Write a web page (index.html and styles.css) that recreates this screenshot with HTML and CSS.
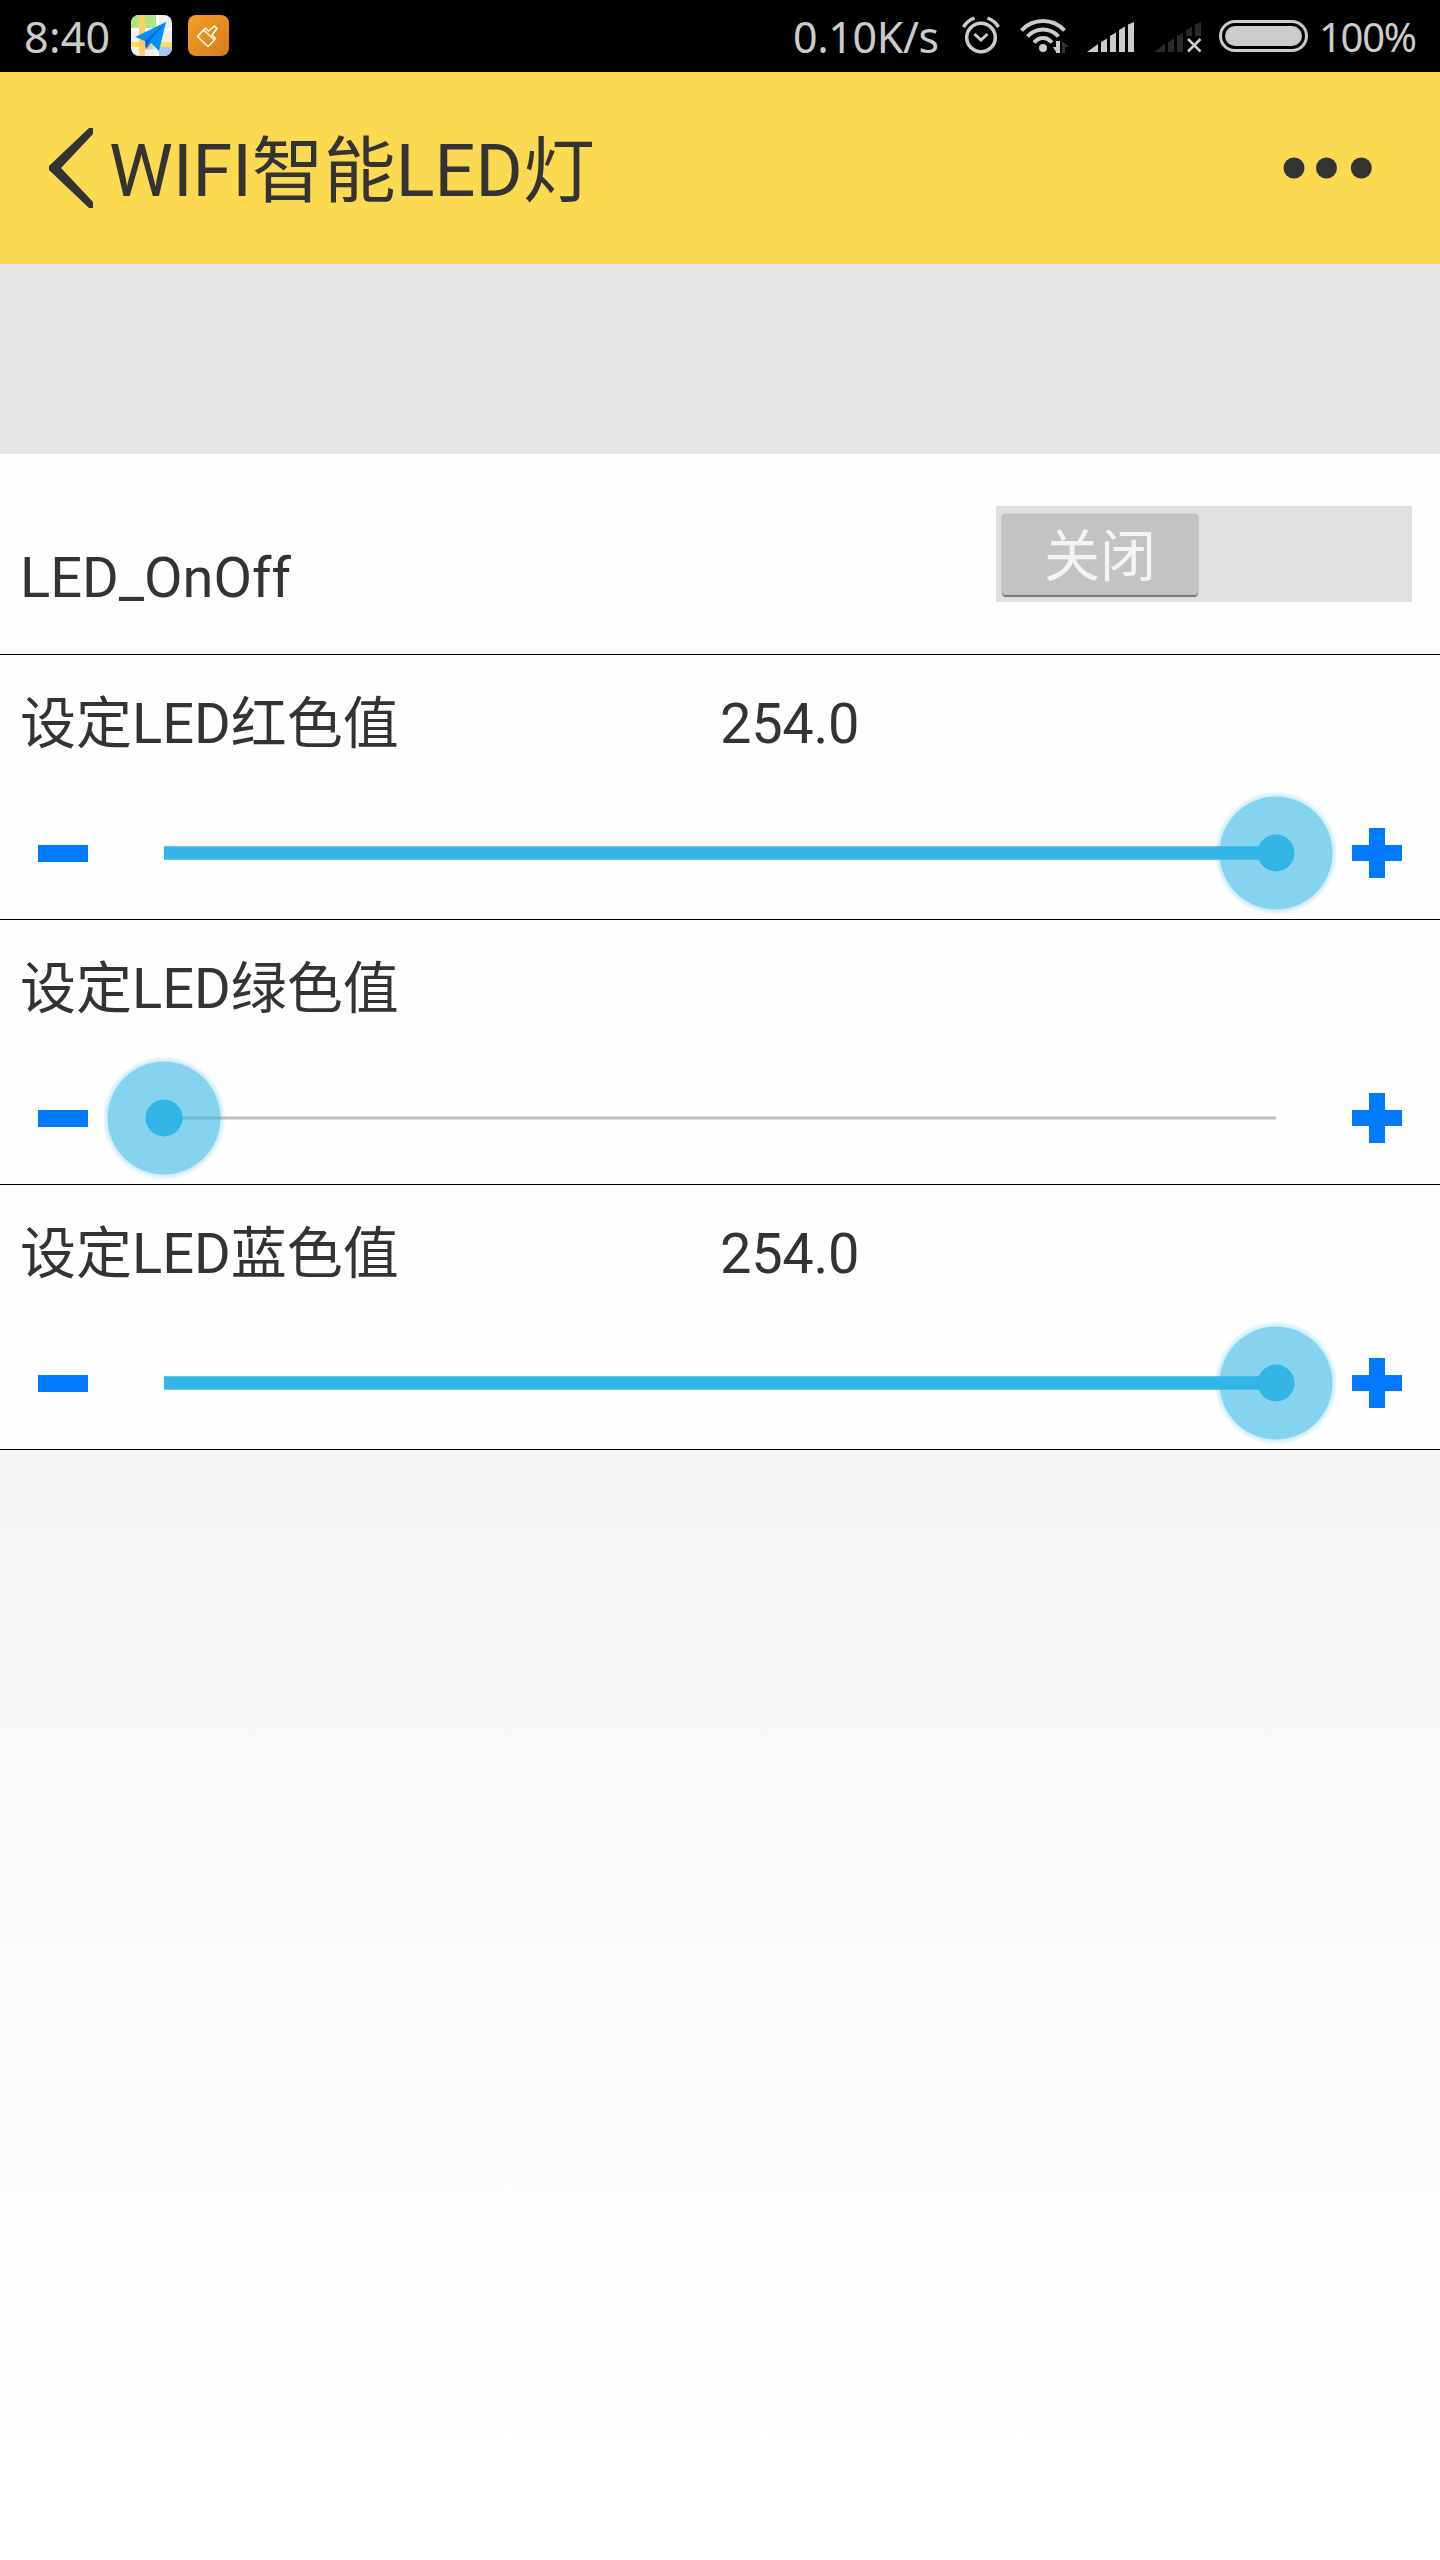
FILE: index.html
```html
<!DOCTYPE html>
<html lang="zh-CN">
<head>
<meta charset="utf-8">
<title>WIFI智能LED灯</title>
<link rel="stylesheet" href="styles.css">
</head>
<body>
<div class="status">
  <span class="clock">8:40</span>
  <svg class="app-map" width="41" height="41" viewBox="0 0 41 41">
    <defs><clipPath id="tile"><rect width="41" height="41" rx="8"/></clipPath></defs>
    <g clip-path="url(#tile)">
      <rect width="41" height="41" fill="#f2f0ec"/>
      <path d="M0 0h25v13H0z" fill="#aee67f"/>
      <path d="M25 0h3v41h-3zM0 13h41v3H0z" fill="#fff"/>
      <path d="M28 32h13v9H28z" fill="#a8c8fb"/>
      <path d="M0 27h41v5H0z" fill="#ffdf4f"/>
      <path d="M8 0h6v41H8z" fill="#ffcc66"/>
    </g>
    <path d="M15 27l-1 8 10-1z" fill="#b8b6ae" opacity=".6"/>
    <path d="M35 7L4 22l10 4 1 8 5-6 8 8z" fill="#0091ff"/>
    <path d="M35 7L14 26l1 8 3-7z" fill="#0067c8"/>
  </svg>
  <svg class="app-clean" width="41" height="41" viewBox="0 0 41 41">
    <defs><linearGradient id="amber" x2="1" y2="1"><stop stop-color="#f2a024"/><stop offset="1" stop-color="#d67a1f"/></linearGradient></defs>
    <rect width="41" height="41" rx="8" fill="url(#amber)"/>
    <path d="M9.500 21.500L15.500 15l11 10-6.500 6.500zM15.500 15l2-2 3 3 6-5 2.500 2.500-5 6.500 3.500 3.500-2 2" fill="none" stroke="#fff" stroke-width="1.500" stroke-linejoin="round"/>
  </svg>
  <span class="rate">0.10K/s</span>
  <svg class="alarm" width="38" height="38" viewBox="0 0 38 38" fill="none" stroke="#ccc" stroke-width="3.500">
    <circle cx="19" cy="21.500" r="14.300"/>
    <path d="M12.500 18l6.500 6 6.500-6" stroke-width="3"/>
    <path d="M1.500 11Q5 5 12.500 2M25.500 2Q33 5 36.500 11"/>
  </svg>
  <svg class="wifi" width="50" height="36" viewBox="0 0 50 36">
    <g fill="none" stroke="#ccc" stroke-width="4">
      <path d="M1.500 12.500Q10 3 23 3t21.500 9.500"/>
      <path d="M7.500 18.500Q14 11.500 23 11.500t15.500 7"/>
      <path d="M14 24.500Q18 20 23 20t9 4.500"/>
    </g>
    <circle cx="23" cy="30" r="4" fill="#ccc"/>
    <path d="M36 23h4v12h-4zM33 29h3v5z" fill="#ccc"/>
    <path d="M42 23l7 6h-4v6h-3z" fill="#333"/>
  </svg>
  <svg class="signal" width="48" height="31" viewBox="0 0 48 31" fill="#ccc"><path d="M0 30l11-8v8zM14 30V20l6-3.500V30zM23 30V14l6-3.500V30zM32 30V8l6-3.500V30zM41 30V2.500L47 0v30z"/></svg>
  <svg class="signal-off" width="48" height="31" viewBox="0 0 48 31" fill="#292929"><path d="M0 30l11-8v8zM14 30V20l6-3.500V30zM23 30V14l6-3.500V30zM32 14V8l6-3.500V14zM41 14V2.500L47 0v14z"/><path d="M34 17l12.500 12.500m0-12.500L34 29.500" stroke="#ccc" stroke-width="2.500"/></svg>
  <svg class="battery" width="89" height="32" viewBox="0 0 89 32"><rect x="1.500" y="1.500" width="86" height="29" rx="14.500" fill="none" stroke="#ccc" stroke-width="3"/><rect x="6" y="6" width="77" height="20" rx="10" fill="#ccc"/></svg>
  <span class="percent">100%</span>
</div>
<header class="titlebar">
  <svg class="back" width="44" height="80" viewBox="0 0 44 80"><path d="M40 0h4v6L12 40l32 34v6h-4L0 42v-4z" fill="#333"/></svg>
  <h1 class="title">WIFI智能LED灯</h1>
  <svg class="more" width="90" height="22" viewBox="0 0 90 22" fill="#333"><circle cx="11" cy="11" r="10.500"/><circle cx="43.500" cy="11" r="10.500"/><circle cx="78.300" cy="11" r="10.500"/></svg>
</header>
<div class="band"></div>
<main class="list">
  <section class="row switch-row">
    <span class="label">LED_OnOff</span>
    <div class="switch"><span class="knob">关闭</span></div>
  </section>
  <section class="row slider-row">
    <div class="info"><span class="label">设定LED红色值</span><span class="value">254.0</span></div>
    <div class="control">
      <i class="minus"></i>
      <svg class="slider" width="1232" height="124" viewBox="0 0 1232 124"><use href="#full"/></svg>
      <svg class="plus" width="50" height="50" viewBox="0 0 50 50"><path d="M17 0h16v17h17v16H33v17H17V33H0V17h17z" fill="#007aff"/></svg>
    </div>
  </section>
  <section class="row slider-row">
    <div class="info"><span class="label">设定LED绿色值</span></div>
    <div class="control">
      <i class="minus"></i>
      <svg class="slider" width="1232" height="124" viewBox="0 0 1232 124"><path d="M60 60.600h1112v2.800H60z" fill="#bfbfbf"/><use href="#thumb" x="60"/></svg>
      <svg class="plus" width="50" height="50" viewBox="0 0 50 50"><path d="M17 0h16v17h17v16H33v17H17V33H0V17h17z" fill="#007aff"/></svg>
    </div>
  </section>
  <section class="row slider-row">
    <div class="info"><span class="label">设定LED蓝色值</span><span class="value">254.0</span></div>
    <div class="control">
      <i class="minus"></i>
      <svg class="slider" width="1232" height="124" viewBox="0 0 1232 124">
        <defs>
          <radialGradient id="halo"><stop offset=".9" stop-color="#33b5e5" stop-opacity=".3"/><stop offset="1" stop-color="#33b5e5" stop-opacity="0"/></radialGradient>
          <g id="thumb">
            <path d="M0 0a62 62 0 0 1 0 124a62 62 0 0 1 0-124M0 6a56 56 0 0 0 0 112a56 56 0 0 0 0-112" fill="url(#halo)"/>
            <circle cy="62" r="56.300" fill="#33b5e5" fill-opacity=".6"/>
            <circle cy="62" r="18.500" fill="#33b5e5"/>
          </g>
          <g id="full"><path d="M60 55.300h1112v13.400H60z" fill="#33b5e5"/><use href="#thumb" x="1172"/></g>
        </defs>
        <use href="#full"/>
      </svg>
      <svg class="plus" width="50" height="50" viewBox="0 0 50 50"><path d="M17 0h16v17h17v16H33v17H17V33H0V17h17z" fill="#007aff"/></svg>
    </div>
  </section>
</main>
</body>
</html>
```

FILE: styles.css
```css
* { box-sizing: border-box; }
body {
  margin: 0;
  width: 1440px;
  min-height: 2560px;
  display: flex;
  flex-direction: column;
  font-family: Roboto, "Noto Sans CJK SC", sans-serif;
  color: #333;
  background: linear-gradient(#e6e6e6 264px, #f5f5f5 1450px, #fafafa 1900px, #fff 2450px);
}
svg { display: block; flex: none; }

.status {
  height: 72px;
  background: #000;
  color: #ccc;
  display: flex;
  align-items: flex-start;
  font-family: "Noto Sans", sans-serif;
  font-size: 43px;
  line-height: 74px;
  white-space: nowrap;
}
.clock { width: 107px; margin-left: 24px; letter-spacing: 0.3px; }
.app-map { margin-top: 15px; }
.app-clean { margin: 15px 0 0 16px; }
.rate { width: 169px; margin-left: 564px; letter-spacing: -0.4px; }
.alarm { margin-top: 16px; }
.wifi { margin: 18px 0 0 20px; }
.signal { margin: 22px 0 0 17px; }
.signal-off { margin: 22px 0 0 19px; }
.battery { margin: 20px 0 0 17px; }
.percent { margin-left: 11px; font-size: 40px; letter-spacing: -1.3px; }

.titlebar {
  height: 192px;
  background: #fbd950;
  display: flex;
  align-items: center;
  padding: 0 67px 0 49px;
}
.title {
  margin: 7px auto 0 16px;
  font-size: 72px;
  font-weight: 400;
  line-height: 84px;
  white-space: nowrap;
}
.band { height: 190px; background: #e6e6e6; }
.list { background: #fefefe; }
.row { border-bottom: 1px solid #000; }
.label, .value { font-size: 56px; line-height: 66px; white-space: nowrap; }
.value { letter-spacing: -0.3px; }

.switch-row {
  height: 201px;
  display: flex;
  justify-content: space-between;
  padding: 52px 28px 0 20px;
}
.switch-row .label { margin-top: 39px; }
.switch {
  width: 416px;
  height: 96px;
  padding: 8px 0 0 6px;
  background: #e0e0e0;
}
.knob {
  display: block;
  width: 196px;
  height: 81px;
  border-radius: 4px;
  background: #c3c3c3;
  box-shadow: 0 2px 1px #777, 0 0 2px #aaa;
  color: #f4f4f4;
  font-size: 56px;
  line-height: 87px;
  text-align: center;
}

.slider-row { height: 265px; padding: 36px 0 0 20px; }
.info { display: grid; grid-template-columns: 700px 1fr; height: 66px; }
.control { display: flex; align-items: center; height: 124px; margin-top: 34px; }
.minus { width: 50px; height: 17px; margin-left: 18px; background: #007aff; }
.slider { margin-left: 16px; }
.plus { margin-left: 16px; }
```
